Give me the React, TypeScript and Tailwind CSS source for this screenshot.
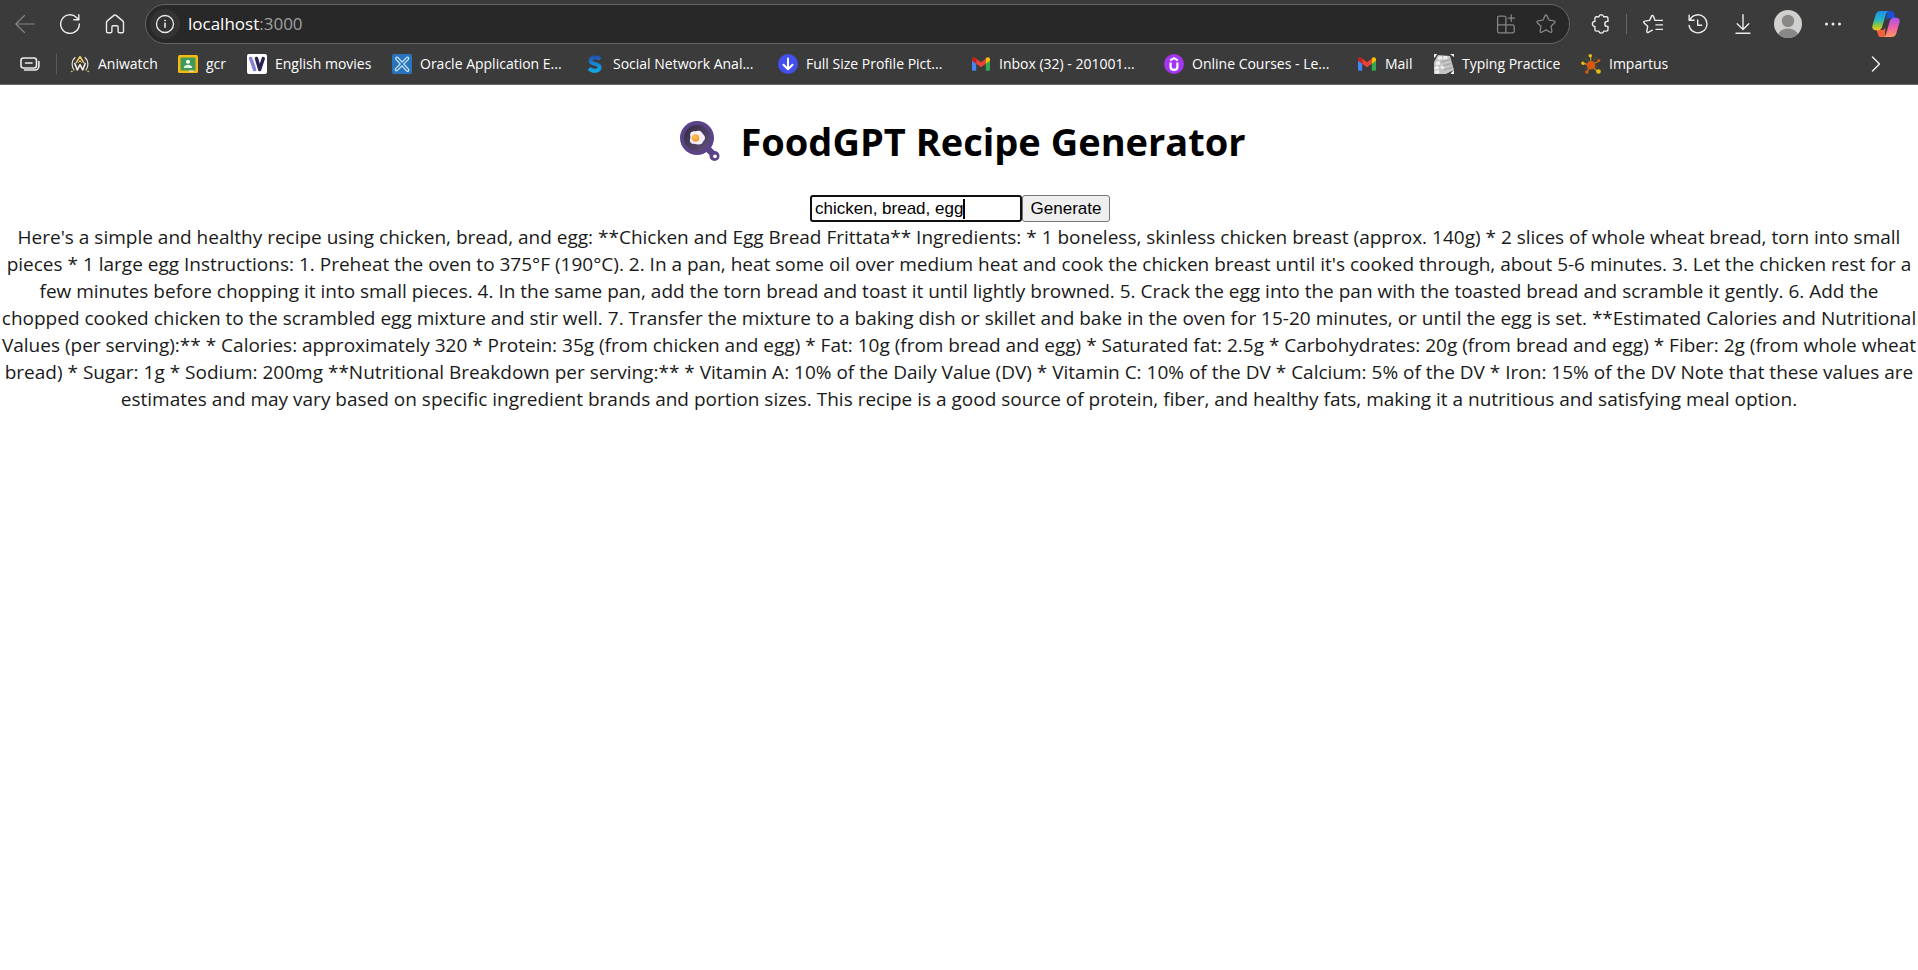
import React, { useState } from "react";

type IconProps = { className?: string };

const stroke = {
  fill: "none",
  stroke: "currentColor",
  strokeLinecap: "round" as const,
  strokeLinejoin: "round" as const,
};

const BackIcon = () => (
  <svg className="size-5" viewBox="0 0 20 20" {...stroke} strokeWidth="1.1">
    <path d="M19.5 10H.8M9.5 1.5.8 10l8.700 8.500" />
  </svg>
);

const ReloadIcon = () => (
  <svg className="size-5" viewBox="0 0 20 20" {...stroke} strokeWidth="1.4">
    <path d="M19.300 10A9.300 9.300 0 1 1 16.500 3.400L18.600 5.500" />
    <path d="M18.800 .8v4.900h-5" />
  </svg>
);

const HomeIcon = () => (
  <svg className="size-5" viewBox="0 0 20 20" {...stroke} strokeWidth="1.4">
    <path d="M1.500 8.600c0-.7.3-1.300.8-1.700l6.600-5.500c.6-.5 1.600-.5 2.200 0l6.600 5.500c.5.4.8 1 .8 1.700v8.800c0 .8-.6 1.400-1.400 1.400h-2.600c-.8 0-1.400-.6-1.400-1.400v-4.500c0-.7-.5-1.200-1.200-1.200H8.100c-.7 0-1.200.5-1.200 1.200v4.500c0 .8-.6 1.400-1.400 1.400H2.900c-.8 0-1.400-.6-1.400-1.400z" />
  </svg>
);

const InfoIcon = () => (
  <svg className="size-5" viewBox="0 0 20 20" {...stroke} strokeWidth="1.3">
    <circle cx="10" cy="10" r="8.500" />
    <path d="M10 9.300v4" strokeWidth="1.600" />
    <circle cx="10" cy="6.500" r=".6" fill="currentColor" strokeWidth=".6" />
  </svg>
);

const AppsIcon = () => (
  <svg className="size-5" viewBox="0 0 20 20" {...stroke} strokeWidth="1.300">
    <path d="M9.900 10.800V3.800c0-.9-.7-1.600-1.600-1.600H3.200c-.9 0-1.600.7-1.600 1.600v13.400c0 .9.700 1.600 1.600 1.600h13.400c.9 0 1.600-.7 1.600-1.600v-4.800c0-.9-.7-1.600-1.600-1.600H1.600M9.900 10.800v8" />
    <path d="M15.300 .9v6.400M12.100 4.100h6.400" />
  </svg>
);

const starPath =
  "M9.100 1.600c.4-.8 1.400-.8 1.800 0l2.200 4.600 5 .7c.9.100 1.200 1.200.6 1.800l-3.700 3.500.9 5c.2.9-.7 1.500-1.500 1.100L10 15.900l-4.400 2.400c-.8.400-1.700-.2-1.500-1.100l.9-5-3.700-3.500c-.6-.6-.3-1.700.6-1.800l5-.7z";

const StarIcon = () => (
  <svg className="size-5" viewBox="0 0 20 20" {...stroke} strokeWidth="1.300">
    <path d={starPath} />
  </svg>
);

const PuzzleIcon = () => (
  <svg className="size-5" viewBox="0 0 20 20" {...stroke} strokeWidth="1.400">
    <path d="M5.500 2.800h2.300a2.500 2.500 0 0 1 4.900 0h2.700c.9 0 1.600.7 1.600 1.600v3h-.7a2.500 2.500 0 0 0 0 5h.7v3.100c0 .9-.7 1.600-1.600 1.600h-2.700a2.500 2.500 0 0 1-4.900 0H5.500c-.9 0-1.600-.7-1.600-1.600v-3.100a2.500 2.500 0 0 1 0-5v-3c0-.9.700-1.600 1.600-1.600z" />
  </svg>
);

const FavoritesIcon = () => (
  <svg className="size-5" viewBox="0 0 20 20" {...stroke} strokeWidth="1.400">
    <path d="m12 6.300-1.700-4.200c-.4-.8-1.400-.8-1.800 0L6.600 6.400l-4.900.7c-.9.100-1.200 1.200-.6 1.800l3.600 3.400-.9 5c-.2.900.7 1.500 1.500 1.100l3.900-2.200M12 6.400h7.500M13 10.900h6.500M13 15.400h6.500" />
  </svg>
);

const HistoryIcon = () => (
  <svg className="size-5" viewBox="0 0 20 20" {...stroke} strokeWidth="1.400">
    <path d="M1.800 6A9 9 0 1 1 1.100 11.500M1.100 1.300v5h5M9.700 6v5.300h4" />
  </svg>
);

const DownloadIcon = () => (
  <svg className="size-5" viewBox="0 0 20 20" {...stroke} strokeWidth="1.400">
    <path d="M10 .8v14.500M4.200 9.800l5.800 5.700 5.800-5.700M3 19.200h14" />
  </svg>
);

const AvatarIcon = () => (
  <svg className="size-7" viewBox="0 0 28 28">
    <clipPath id="avatar-clip">
      <circle cx="14" cy="14" r="14" />
    </clipPath>
    <g clipPath="url(#avatar-clip)">
      <rect width="28" height="28" fill="#d2d0ce" />
      <circle cx="14" cy="11" r="6.200" fill="#8a8886" />
      <ellipse cx="14" cy="25.500" rx="9.800" ry="7" fill="#8a8886" />
    </g>
  </svg>
);

const MoreIcon = () => (
  <svg className="size-5" viewBox="0 0 20 20" fill="currentColor">
    <circle cx="3.500" cy="10" r="1.500" />
    <circle cx="10" cy="10" r="1.500" />
    <circle cx="16.500" cy="10" r="1.500" />
  </svg>
);

const CopilotIcon = () => (
  <svg className="size-7" viewBox="0 0 28 28">
    <defs>
      <linearGradient id="cp-left" x1="0" y1="0" x2="0" y2="1">
        <stop offset="0" stopColor="#1a8fe8" />
        <stop offset=".45" stopColor="#25b5c8" />
        <stop offset=".75" stopColor="#8fc83f" />
        <stop offset="1" stopColor="#f6c41c" />
      </linearGradient>
      <linearGradient id="cp-right" x1="0" y1="0" x2="0" y2="1">
        <stop offset="0" stopColor="#a855f0" />
        <stop offset=".5" stopColor="#ee5fa8" />
        <stop offset="1" stopColor="#ff9a5c" />
      </linearGradient>
    </defs>
    <path d="M15 1h4c1.800 0 2.600 1 3.100 2.600L23.400 8H18c-2 0-2.700 1-3.300 3z" fill="#1a52d6" />
    <path d="M13 27H9c-1.800 0-2.600-1-3.100-2.600L4.600 20H10c2 0 2.700-1 3.300-3z" fill="#f4603a" />
    <path d="M8.500 1h8c-1.600.6-2.200 2-2.700 3.600l-3.600 12.200C9.500 19 8.400 20.200 6.500 20.200H3.700C.8 20.200-.2 18 .5 15.400L3.700 4.600C4.400 2.400 6 1 8.500 1z" fill="url(#cp-left)" />
    <path d="M19.500 27h-8c1.600-.6 2.200-2 2.700-3.600l3.600-12.200c.7-2.200 1.800-3.400 3.700-3.400h2.800c2.900 0 3.900 2.200 3.200 4.800l-3.200 10.800c-.7 2.200-2.300 3.600-4.800 3.600z" fill="url(#cp-right)" />
  </svg>
);

const TabsIcon = () => (
  <svg className="size-5" viewBox="0 0 20 20" {...stroke} strokeWidth="1.600">
    <rect x="1" y="4" width="15.500" height="10" rx="2.500" />
    <path d="M5.500 9h6.500M18.900 7.500V12a4 4 0 0 1-4 4H4.500" />
  </svg>
);

const AniwatchIcon = () => (
  <svg className="size-5" viewBox="0 0 20 20" fill="none" strokeLinecap="round" strokeLinejoin="round">
    <path d="M5 3.500C1.200 7 1.400 12.500 4 16M15 3.500c3.800 3.500 3.600 9 1 12.500" stroke="#f5efe4" strokeWidth="1.100" />
    <path d="M4.800 9.500 7.300 16 10 10.500l2.700 5.500 2.500-6.500" stroke="#f5efe4" strokeWidth="1.600" />
    <path d="M6.300 8.500 10 2.500l3.700 6" stroke="#e8c56f" strokeWidth="1.500" />
    <path d="m8.700 8.500 1.300-2 1.300 2" stroke="#e8c56f" strokeWidth="1" />
    <path d="M1.500 17.500h.6M17.900 17.500h.6" stroke="#e8b85a" strokeWidth="1.400" />
  </svg>
);

const ClassroomIcon = () => (
  <svg className="size-5" viewBox="0 0 20 20">
    <rect y="1" width="20" height="18" rx="1.500" fill="#f4b912" />
    <rect x="2.500" y="3.500" width="15" height="13" fill="#3f9b55" />
    <circle cx="10" cy="7.800" r="2" fill="#fff" />
    <path d="M5.800 14c0-2.600 2-3.300 4.200-3.300s4.200.7 4.200 3.300z" fill="#e6f4e8" />
    <path d="M11 16.500h4.500v1.200H11z" fill="#e6e6e6" />
  </svg>
);

const MoviesIcon = () => (
  <svg className="size-5" viewBox="0 0 20 20" fill="none" strokeLinecap="round" strokeLinejoin="round">
    <rect width="20" height="20" rx="2" fill="#fff" />
    <path d="m3.700 4.500 3.800 11" stroke="#8583d8" strokeWidth="3.600" />
    <path d="m9.500 4.500 3.200 11L16.300 4.500" stroke="#2b2350" strokeWidth="3.400" />
  </svg>
);

const OracleIcon = () => (
  <svg className="size-5" viewBox="0 0 20 20" fill="none" strokeLinejoin="round" strokeLinecap="round">
    <rect width="20" height="20" rx="2" fill="#2775bd" />
    <path d="m5 4.500 10.500 11.500M15.500 4.500 4.500 15.500" stroke="#d9ecfb" strokeWidth="3.800" />
    <path d="m5 4.500 10.500 11.500M15.500 4.500 4.500 15.500" stroke="#2775bd" strokeWidth="1.500" />
  </svg>
);

const SocialIcon = () => (
  <svg className="size-5" viewBox="0 0 20 20" fill="none">
    <defs>
      <linearGradient id="social-s" x1="0" y1="0" x2="0" y2="20" gradientUnits="userSpaceOnUse">
        <stop offset="0" stopColor="#2443a8" />
        <stop offset=".5" stopColor="#1686d4" />
        <stop offset="1" stopColor="#10b4e8" />
      </linearGradient>
    </defs>
    <path d="M15.200 5.300C13.700 3.600 12 3.200 10.200 3.200c-2.600 0-4.600 1.300-4.600 3.300 0 4.400 9 2.400 9 6.700 0 2.300-2.200 3.600-4.800 3.600-2.200 0-4.200-.8-5.600-2.400" stroke="url(#social-s)" strokeWidth="4" />
  </svg>
);

const DownloadBadgeIcon = () => (
  <svg className="size-5" viewBox="0 0 20 20" fill="none" strokeLinecap="round" strokeLinejoin="round">
    <circle cx="10" cy="10" r="10" fill="#4350ee" />
    <path d="M10 4.500v10.500M5.500 10.700 10 15.200l4.500-4.500" stroke="#fff" strokeWidth="2" />
  </svg>
);

const GmailIcon = () => (
  <svg className="size-5" viewBox="0 0 20 20">
    <path d="M1 6v9.500c0 .8.500 1.300 1.300 1.300h2.900V9z" fill="#4285f4" />
    <path d="M19 6v9.500c0 .8-.5 1.300-1.300 1.300h-2.900V9z" fill="#34a853" />
    <path d="M5.200 4.700 10 8.300l4.800-3.600v5L10 13.300 5.200 9.700z" fill="#ea4335" />
    <path d="M1 5.300c0-2 2.200-2.800 3.600-1.600l.6.500v5.500L1 6.700z" fill="#c5221f" />
    <path d="M19 5.300c0-2-2.200-2.800-3.600-1.600l-.6.500v5.500L19 6.700z" fill="#fbbc04" />
  </svg>
);

const CoursesIcon = () => (
  <svg className="size-5" viewBox="0 0 20 20" fill="none">
    <circle cx="10" cy="10" r="10" fill="#a435f0" />
    <path d="M6.600 8.500v4.200c0 2 1.300 3.200 3.400 3.200s3.400-1.200 3.400-3.200V8.500" stroke="#fff" strokeWidth="2.200" />
    <path d="M6.200 6.400 10 4.200l3.800 2.200" stroke="#fff" strokeWidth="1.900" />
  </svg>
);

const TypingIcon = () => (
  <svg className="size-5" viewBox="0 0 20 20">
    <path d="M0 0h3l-2 3.500H0zM16 0h4v3zM17 19l3-3v4h-3z" fill="#f2f2f2" />
    <path d="m4 1 12 1 4 14-8 4H0V8z" fill="#c4c4c4" />
    <path d="m3.500 3 4-1 1 3-4 1zM2 8l3.500-1 .8 3.500-4 .8zM9 2.500l4-.7.800 3-4 .7zM.5 13l4-1 .6 3-4.500.7zM6.500 12l3-.8 1 3-3.300.7zM1 17l4-1 .5 3.500H1z" fill="#f0f0f0" />
    <path d="m7 8 9-2.500M8.500 12 17 9.500M10 16l8-2.500" stroke="#8f8f8f" strokeWidth=".7" />
  </svg>
);

const ImpartusIcon = () => (
  <svg className="size-5" viewBox="0 0 20 20">
    <path d="M10 11 9.500 2M10 11l8-4M10 11l7 7M10 11l-4 7M10 11 2 9.500" stroke="#b98a1c" strokeWidth="1.300" />
    <path d="m4 4 4 4M15 3l-3 5M4 15l4-2M16 13l-3-1" stroke="#4c6a2c" strokeWidth=".8" />
    <circle cx="10" cy="11.200" r="4.200" fill="#dc5510" />
    <circle cx="9.300" cy="1.800" r="1.800" fill="#e6bd10" />
    <circle cx="1.900" cy="9.300" r="1.700" fill="#e6bd10" />
    <circle cx="17.500" cy="17.500" r="2.300" fill="#e6bd10" />
    <circle cx="17.800" cy="6.600" r="1.600" fill="#dc5510" />
    <circle cx="5.800" cy="18" r="1.800" fill="#dc5510" />
  </svg>
);

const ChevronIcon = () => (
  <svg className="size-5" viewBox="0 0 20 20" {...stroke} strokeWidth="1.500">
    <path d="m6.500 3 7 7-7 7" />
  </svg>
);

const PanIcon = ({ className }: IconProps) => (
  <svg className={className} viewBox="0 0 40 40" aria-hidden="true">
    <defs>
      <linearGradient id="pan-inner" x1="0" y1="0" x2="1" y2="1">
        <stop offset="0" stopColor="#322a3f" />
        <stop offset="1" stopColor="#62517c" />
      </linearGradient>
      <radialGradient id="yolk" cx=".4" cy=".35" r=".7">
        <stop offset="0" stopColor="#ffc750" />
        <stop offset="1" stopColor="#ee9424" />
      </radialGradient>
    </defs>
    <path d="m26 26 8 8" stroke="#5a4389" strokeWidth="6.500" strokeLinecap="round" />
    <circle cx="34.500" cy="35" r="5" fill="#5a4389" />
    <circle cx="35" cy="35.300" r="1.900" fill="#fff" />
    <circle cx="17" cy="17" r="17" fill="#5a4389" />
    <circle cx="17" cy="17" r="13" fill="url(#pan-inner)" />
    <path d="M11 11.500c2-2 4-.8 6-1.500 3-1 4.500.5 5.500 2.500 1 1.500 3 2.500 2.500 5-.3 1.800-1.700 2-2.300 3.800-.8 2.200-3.500 2.500-5.700 2-2.500-.5-5.500.2-6.800-2.300-.8-1.800.3-3 .2-5-.1-1.800-.7-3.200.600-4.500z" fill="#f7effb" />
    <circle cx="15.500" cy="17" r="3.700" fill="url(#yolk)" />
  </svg>
);

type Bookmark = { label: string; width: string; Icon: () => React.JSX.Element };

const bookmarks: Bookmark[] = [
  { label: "Aniwatch", width: "w-[87px]", Icon: AniwatchIcon },
  { label: "gcr", width: "w-12", Icon: ClassroomIcon },
  { label: "English movies", width: "w-31", Icon: MoviesIcon },
  { label: "Oracle Application E...", width: "w-43", Icon: OracleIcon },
  { label: "Social Network Anal...", width: "w-43", Icon: SocialIcon },
  { label: "Full Size Profile Pict...", width: "w-43", Icon: DownloadBadgeIcon },
  { label: "Inbox (32) - 201001...", width: "w-43", Icon: GmailIcon },
  { label: "Online Courses - Le...", width: "w-43", Icon: CoursesIcon },
  { label: "Mail", width: "w-14", Icon: GmailIcon },
  { label: "Typing Practice", width: "w-[126px]", Icon: TypingIcon },
  { label: "Impartus", width: "w-[87px]", Icon: ImpartusIcon },
];

const recipe = [
  "Here's a simple and healthy recipe using chicken, bread, and egg: **Chicken and Egg Bread Frittata** Ingredients: * 1 boneless, skinless chicken breast (approx. 140g) * 2 slices of whole wheat bread, torn into small",
  "pieces * 1 large egg Instructions: 1. Preheat the oven to 375°F (190°C). 2. In a pan, heat some oil over medium heat and cook the chicken breast until it's cooked through, about 5-6 minutes. 3. Let the chicken rest for a",
  "few minutes before chopping it into small pieces. 4. In the same pan, add the torn bread and toast it until lightly browned. 5. Crack the egg into the pan with the toasted bread and scramble it gently. 6. Add the",
  "chopped cooked chicken to the scrambled egg mixture and stir well. 7. Transfer the mixture to a baking dish or skillet and bake in the oven for 15-20 minutes, or until the egg is set. **Estimated Calories and Nutritional",
  "Values (per serving):** * Calories: approximately 320 * Protein: 35g (from chicken and egg) * Fat: 10g (from bread and egg) * Saturated fat: 2.5g * Carbohydrates: 20g (from bread and egg) * Fiber: 2g (from whole wheat",
  "bread) * Sugar: 1g * Sodium: 200mg **Nutritional Breakdown per serving:** * Vitamin A: 10% of the Daily Value (DV) * Vitamin C: 10% of the DV * Calcium: 5% of the DV * Iron: 15% of the DV Note that these values are",
  "estimates and may vary based on specific ingredient brands and portion sizes. This recipe is a good source of protein, fiber, and healthy fats, making it a nutritious and satisfying meal option.",
];

function ToolButton({ label, className = "", children }: { label: string; className?: string; children: React.ReactNode }) {
  return (
    <button type="button" aria-label={label} className={`flex h-10 w-[45px] shrink-0 items-center justify-center ${className}`}>
      {children}
    </button>
  );
}

function BrowserBar() {
  return (
    <header className="border-b border-[#6b6b6b] bg-[#3b3b3b] text-[#ececec]">
      <div className="flex items-center px-0.5 pt-1">
        <ToolButton label="Back" className="text-[#858585]"><BackIcon /></ToolButton>
        <ToolButton label="Reload"><ReloadIcon /></ToolButton>
        <ToolButton label="Home"><HomeIcon /></ToolButton>
        <div className="mx-2 flex h-10 min-w-0 flex-1 items-center rounded-full border border-[#666] bg-[#282828] pr-[3px] pl-1">
          <button type="button" aria-label="Site information" className="flex size-[30px] shrink-0 items-center justify-center rounded-full bg-[#333]">
            <InfoIcon />
          </button>
          <a href="http://localhost:3000" className="ml-2 min-w-0 flex-1 truncate text-[17px] leading-6 text-white">
            localhost<span className="text-[#a0a0a0]">:3000</span>
          </a>
          <button type="button" aria-label="Install app" className="flex size-10 items-center justify-center text-[#858585]"><AppsIcon /></button>
          <button type="button" aria-label="Add to favorites" className="flex size-10 items-center justify-center text-[#858585]"><StarIcon /></button>
        </div>
        <ToolButton label="Extensions"><PuzzleIcon /></ToolButton>
        <div className="mx-[3px] h-5 w-px shrink-0 bg-[#666]" />
        <ToolButton label="Favorites"><FavoritesIcon /></ToolButton>
        <ToolButton label="History"><HistoryIcon /></ToolButton>
        <ToolButton label="Downloads"><DownloadIcon /></ToolButton>
        <ToolButton label="Profile"><AvatarIcon /></ToolButton>
        <ToolButton label="Settings and more"><MoreIcon /></ToolButton>
        <ToolButton label="Copilot" className="mr-2 ml-2"><CopilotIcon /></ToolButton>
      </div>
      <nav aria-label="Bookmarks" className="flex h-10 items-center pr-8 pl-5">
        <button type="button" aria-label="Tab actions" className="shrink-0"><TabsIcon /></button>
        <div className="mr-[13px] ml-4 h-5 w-px shrink-0 bg-[#5a5a5a]" />
        <div className="flex min-w-0 flex-1 gap-[21px] overflow-hidden">
          {bookmarks.map(({ label, width, Icon }) => (
            <a key={label} href="#" className={`flex shrink-0 items-center gap-2 ${width}`}>
              <span className="shrink-0"><Icon /></span>
              <span className="text-sm leading-5 whitespace-nowrap text-white">{label}</span>
            </a>
          ))}
        </div>
        <button type="button" aria-label="More bookmarks" className="shrink-0"><ChevronIcon /></button>
      </nav>
    </header>
  );
}

export default function App() {
  const [ingredients, setIngredients] = useState("chicken, bread, egg");
  return (
    <div className="min-h-screen bg-white font-['Open_Sans','Noto_Sans',sans-serif]">
      <BrowserBar />
      <main className="pt-7 text-center text-[#1a1a1a]">
        <h1 className="flex items-center justify-center gap-5 pl-2 text-[38px] leading-[56px] font-bold text-black">
          <PanIcon className="size-10" />
          FoodGPT Recipe Generator
        </h1>
        <form className="mt-[26px] flex justify-center pl-0.5 font-['Liberation_Sans',Arial,sans-serif] text-[17px]" onSubmit={(e) => e.preventDefault()}>
          <div className="relative">
            <input
              aria-label="Ingredients"
              value={ingredients}
              onChange={(e) => setIngredients(e.target.value)}
              className="h-[27px] w-53 rounded-[3px] border-2 border-[#101010] bg-white px-[3px] text-black outline-none"
            />
            <span className="absolute top-1 left-[153px] h-5 w-0.5 bg-black" />
          </div>
          <button type="submit" className="h-[27px] w-[88px] rounded-[3px] border border-[#767676] bg-[#efefef] leading-6 text-black">
            Generate
          </button>
        </form>
        <p className="mt-0.5 text-[19px] leading-[27px]">
          {recipe.map((line) => (
            <span key={line} className="block">{line}</span>
          ))}
        </p>
      </main>
    </div>
  );
}
